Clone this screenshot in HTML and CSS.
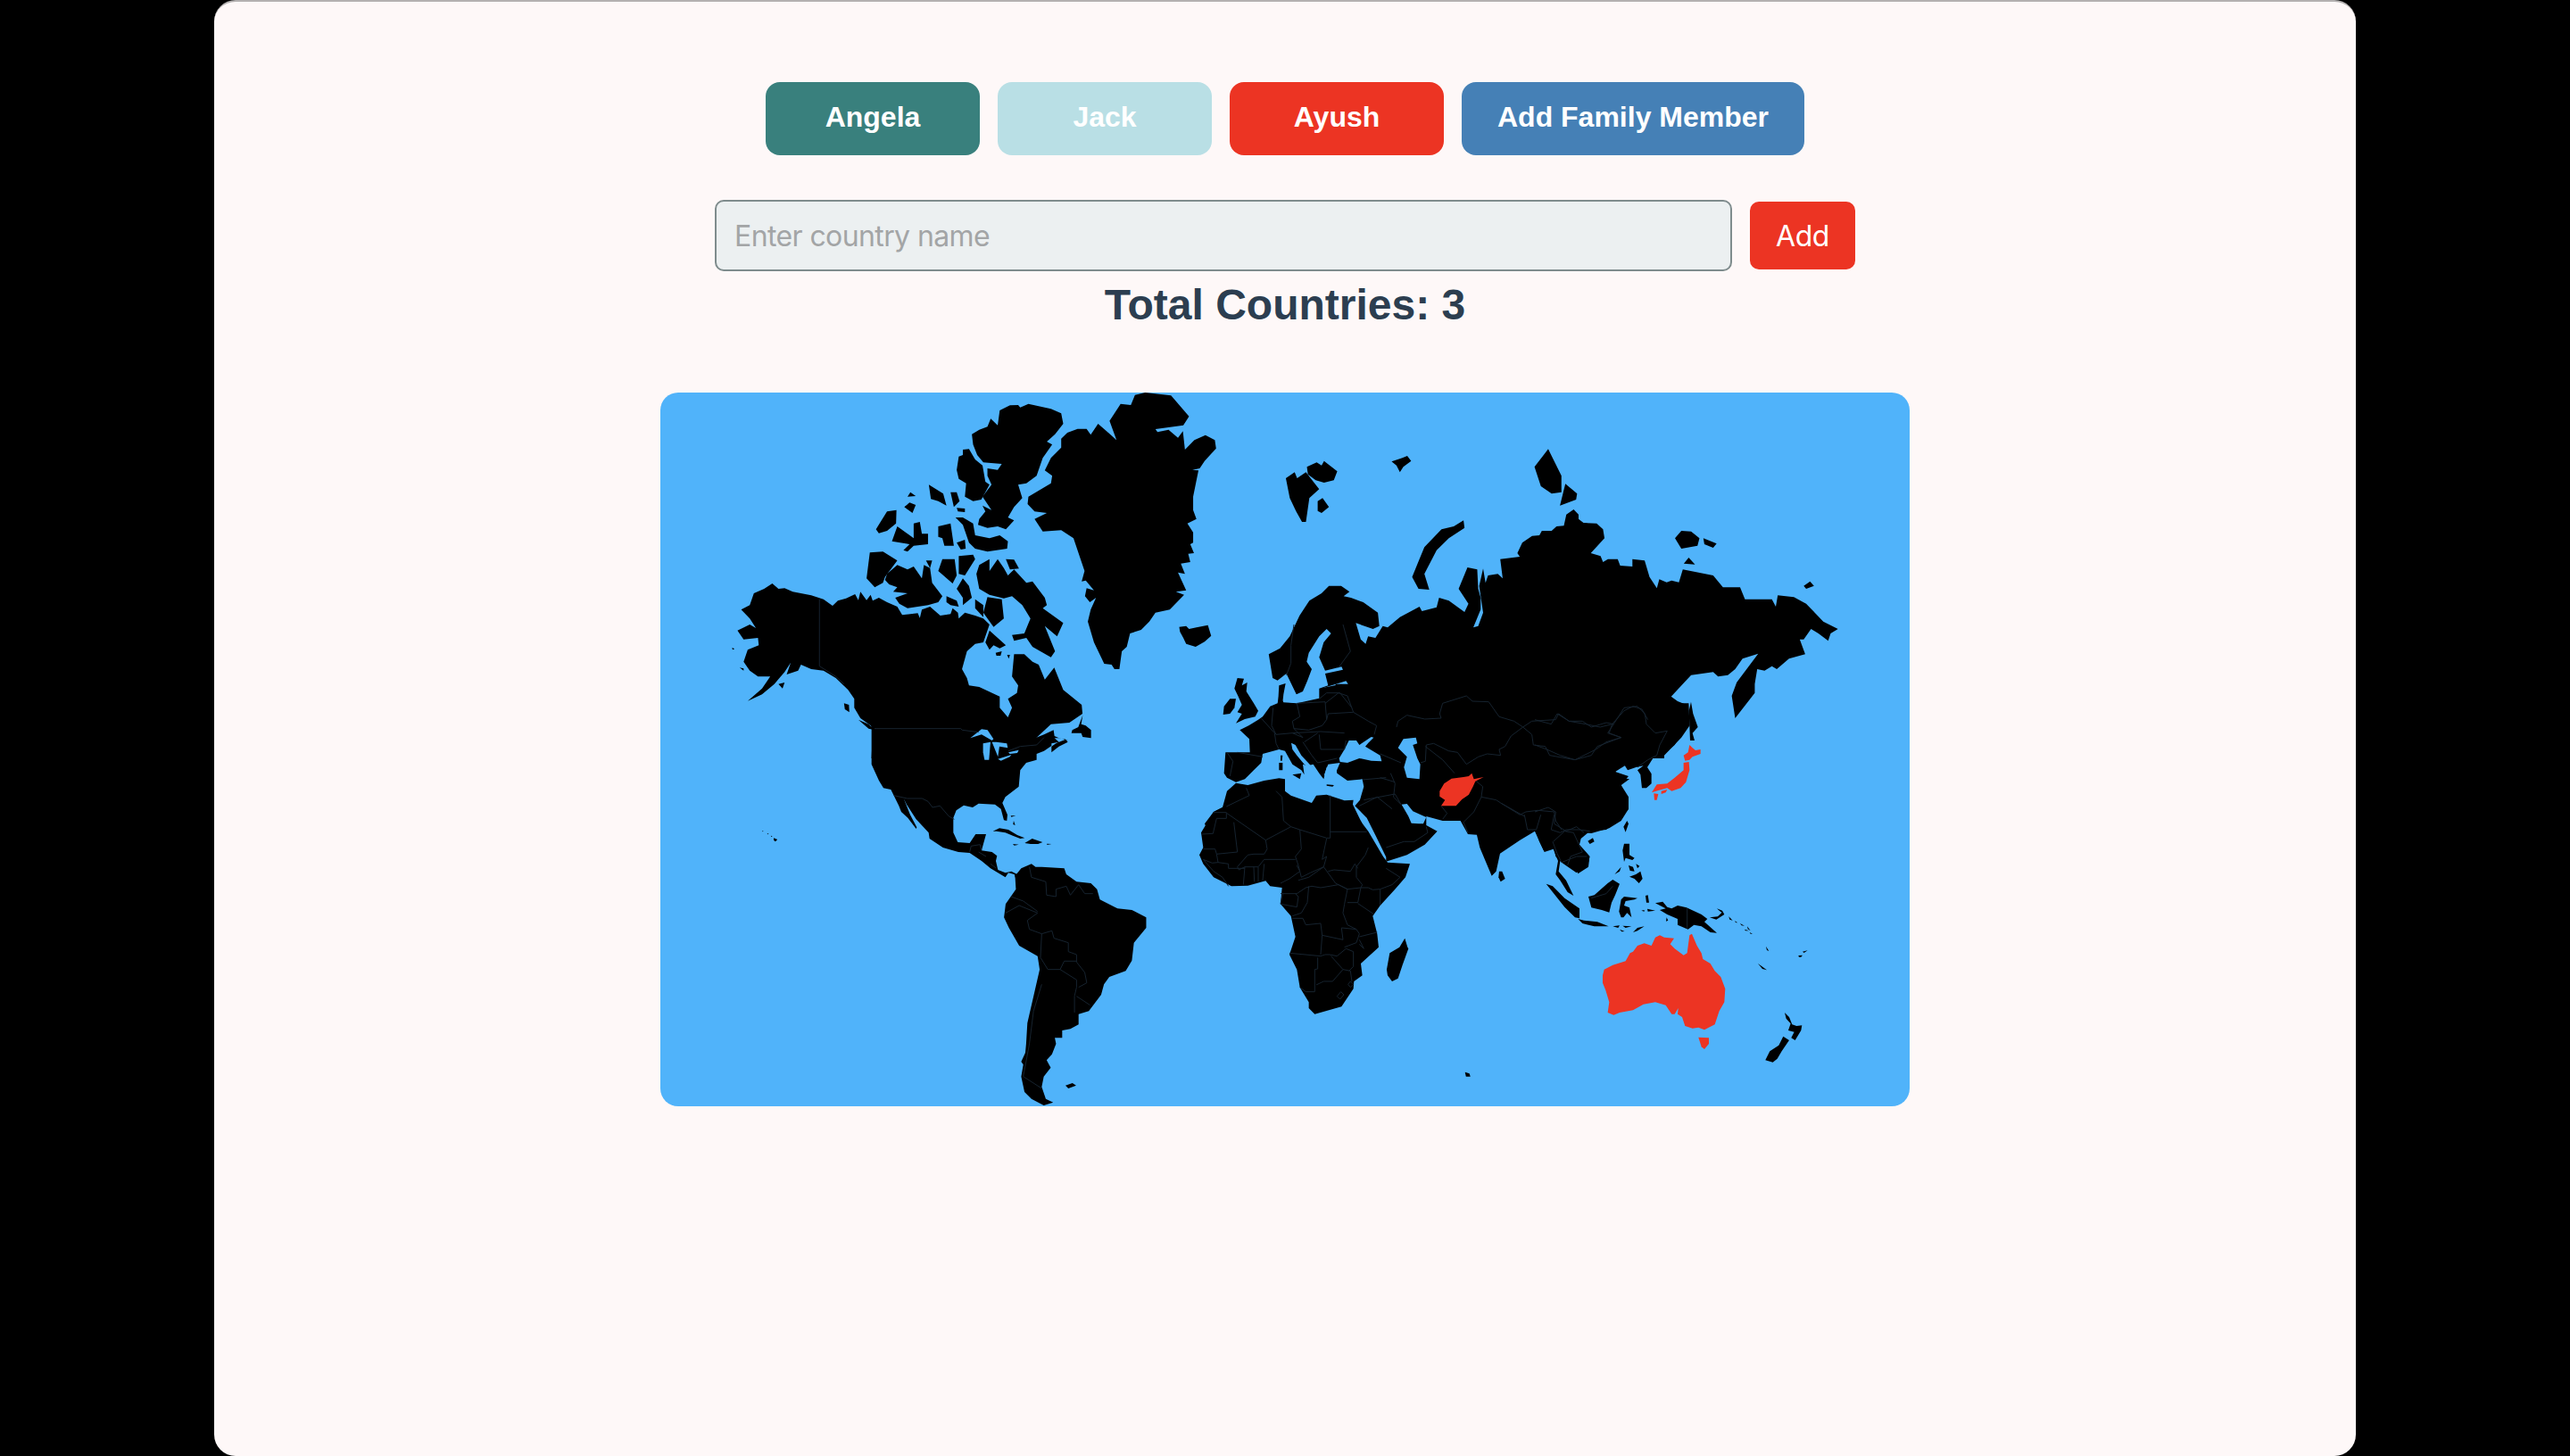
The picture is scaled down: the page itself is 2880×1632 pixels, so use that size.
FILE: index.html
```html
<!DOCTYPE html>
<html lang="en">
<head>
<meta charset="utf-8">
<title>Family Travel Tracker</title>
<link rel="stylesheet" href="styles.css">
</head>
<body>
<main class="card">
  <nav class="tabs">
    <button class="tab tab-teal">Angela</button>
    <button class="tab tab-pale">Jack</button>
    <button class="tab tab-red">Ayush</button>
    <button class="tab tab-blue">Add Family Member</button>
  </nav>
  <form class="entry">
    <input class="entry-input" type="text" placeholder="Enter country name">
    <button class="entry-add" type="button">Add</button>
  </form>
  <h2 class="total">Total Countries: 3</h2>
  <div class="map">
    <svg class="map-svg" viewBox="740 440 1400 800" aria-label="World map">
      <!-- North America, Arctic, Greenland, Iceland -->
      <g class="land" transform="translate(730 430) scale(.4592 .3333)">
        <path d="M219 760L240 745L250 705L275 690L295 672L310 690L325 688L345 700L390 712L420 725L442 747L455 730L475 722L497 708L505 728L510 700L525 728L535 710L540 730L555 720L575 735L600 750L612 778L650 772L655 788L660 760L680 750L705 780L730 775L735 755L748 770L750 790L765 770L790 780L810 790L825 810L810 870L790 875L770 900L758 960L770 990L775 1015L800 1020L850 1052L850 1090L870 1122L880 1090L870 1060L892 1040L895 1015L880 985L885 910L910 910L930 935L945 945L960 995L983 955L1005 1030L1050 1080L1052 1110L1020 1140L975 1145L940 1190L915 1260L537 1260L540 1170L550 1185L535 1150L510 1125L495 1090L495 1060L480 1030L450 990L420 965L390 960L365 945L358 965L330 978L340 938L325 970L300 1010L270 1045L235 1067L270 1025L290 985L260 985L240 965L225 935L235 895L262 880L260 855L225 860L210 830L240 810L255 822L240 790Z"/>
        <path d="M800 610L825 590L825 630L845 590L860 620L870 645L885 625L915 670L930 665L960 720L965 745L955 755L1005 805L990 850L960 815L985 900L975 920L930 885L915 855L885 865L880 845L910 840L925 790L905 745L880 715L860 722L825 710L800 690L793 640Z"/>
        <path d="M865 590L885 592L897 622L875 625Z"/>
        <path d="M825 830L865 880L850 890L835 880L825 895L815 870Z"/>
        <path d="M840 905L855 900L852 915L842 915ZM868 912L875 912L872 925Z"/>
        <path d="M575 640L600 610L625 625L640 615L660 655L665 610L680 620L685 670L710 715L700 735L675 745L625 755L605 740L595 720L625 705L590 700L600 685L580 675L570 660Z"/>
        <path d="M533 568L565 565L600 595L570 650L565 670L545 685L525 655Z"/>
        <path d="M710 590L740 590L745 645L735 672L700 630ZM750 580L785 575L790 590L765 645L750 640ZM760 655L775 680L782 720L760 745L760 720L745 690ZM820 718L855 725L860 790L835 818L820 790L810 770ZM790 725L810 745L810 785L790 755ZM720 715L745 730L750 750L730 745L720 735ZM670 595L685 595L680 620Z"/>
        <path d="M575 430L598 425L597 470L575 495L555 503L548 490ZM600 480L640 520L640 470L655 465L660 505L675 505L675 540L640 545L625 565L615 560L630 540L587 530ZM700 480L730 470L738 545L715 545L710 520L700 515ZM745 535L765 525L767 555L755 558ZM742 450L760 450L785 470L790 510L825 520L850 510L870 530L868 555L820 565L790 555L775 535L760 475ZM677 340L712 370L720 410L700 395L682 388ZM730 365L745 365L752 395L738 415ZM745 418L765 420L765 432L748 430ZM625 380L632 365L645 378ZM617 415L630 400L645 408L637 435Z"/>
        <path d="M782 170L800 155L820 145L828 118L845 140L850 90L875 73L895 72L900 80L920 68L975 85L1000 100L1005 135L985 170L965 195L978 205L955 250L940 310L915 335L895 340L905 385L885 415L870 450L885 460L865 490L845 480L820 485L797 475L800 455L815 430L808 410L830 425L808 380L830 340L820 310L820 285L845 290L855 270L810 265L795 240L785 205Z"/>
        <path d="M760 222L775 220L790 255L808 275L815 330L825 340L805 390L785 395L765 380L768 335L750 320L745 290L750 245L760 240Z"/>
        <path d="M1000 185L1015 165L1040 152L1062 152L1072 172L1090 135L1115 165L1135 190L1118 125L1145 68L1170 72L1180 38L1205 30L1268 40L1312 110L1298 140L1230 153L1235 163L1262 155L1285 182L1297 160L1302 222L1325 190L1352 173L1375 190L1378 218L1350 260L1338 285L1320 290L1335 292L1322 380L1322 425L1330 455L1308 470L1322 500L1322 535L1315 540L1324 570L1310 572L1315 600L1292 605L1302 640L1285 635L1305 695L1280 700L1300 710L1265 760L1230 770L1215 800L1195 828L1168 840L1160 885L1148 900L1142 960L1130 960L1123 945L1105 942L1080 870L1065 800L1072 760L1085 720L1070 735L1058 715L1062 688L1080 695L1060 662L1050 665L1057 630L1030 520L1000 493L955 497L935 455L965 435L935 430L918 405L920 380L975 335L978 310L960 292L975 250L1000 215Z"/>
        <path d="M1288 818L1305 815L1312 825L1330 820L1358 812L1366 848L1350 868L1328 885L1305 875L1298 855L1290 835Z"/>
        <path d="M470 1075L482 1080L483 1105L472 1095ZM505 1130L530 1145L545 1165L530 1160ZM215 955L225 958L225 965ZM310 1010L325 1005L320 1025ZM197 888L203 892L198 895Z"/>
      </g>
      <!-- USA, Mexico, Central America, Caribbean -->
      <g class="land" transform="translate(930 720) scale(.3333)">
        <path d="M140 260L140 410L165 465L180 490L205 495L215 515L232 550L240 570L262 590L290 627L292 622L270 580L248 525L258 545L290 595L332 640L335 660L380 690L432 705L470 708L510 735L540 760L565 775L590 790L600 775L620 780L625 795L630 780L610 770L590 775L565 765L558 735L562 718L545 705L510 700L525 645L490 645L470 675L430 672L415 640L415 590L425 565L450 548L480 555L500 542L555 545L575 560L585 598L595 600L597 580L580 540L590 520L635 485L640 430L660 405L695 395L695 375L720 365L745 348L745 340L800 330L770 322L755 315L752 295L720 310L690 322L640 260Z"/>
        <path d="M745 370L770 350L800 335L790 325L760 340L745 350Z"/>
        <path d="M850 245L835 285L815 295L812 305L845 305L850 318L878 322L878 295L860 280L845 275Z"/>
        <path d="M548 635L570 625L600 630L630 648L655 658L640 660L615 650L590 640L560 635ZM655 675L680 660L715 672L700 678L675 678ZM615 678L635 680L620 683ZM730 677L745 678L730 681ZM608 583L625 583L610 587ZM618 600L623 615L616 612Z"/>
      </g>
      <!-- South America and mid-ocean islands -->
      <g class="land" transform="translate(800 840) scale(.4592 .3333)">
        <path d="M735 425L750 400L775 385L785 395L800 395L855 400L860 420L885 445L920 450L935 470L942 505L985 535L1020 540L1055 565L1055 600L1025 650L1020 710L1005 745L965 765L952 790L945 825L915 880L890 890L890 925L870 940L850 945L850 970L832 970L835 990L825 1025L812 1045L822 1070L805 1100L800 1135L810 1175L828 1187L805 1197L775 1175L758 1152L750 1100L755 1060L750 1050L760 1020L762 990L765 920L780 830L795 740L790 695L745 660L720 600L708 565L712 520L737 470Z"/>
        <path d="M858 1130L875 1122L884 1130L865 1140ZM146 298L155 303L150 310L146 305ZM118 273L121 275L119 277ZM130 282L134 284L131 286ZM139 290L143 292L140 294Z"/>
      </g>
      <!-- Northern Eurasia and Arctic islands -->
      <g class="land" transform="translate(1300 430) scale(.5485 .3333)">
        <path d="M222 910L245 890L265 850L285 780L305 730L330 705L345 680L370 680L387 700L375 715L390 720L415 735L445 770L448 815L435 825L400 805L410 860L420 875L425 850L440 855L455 815L465 820L490 785L530 750L535 765L565 752L570 720L590 730L622 768L630 740L610 690L628 618L648 625L650 690L655 720L655 760L640 820L650 815L660 770L652 680L660 622L665 670L670 645L690 640L700 655L695 590L735 582L730 570L740 535L760 512L775 510L780 495L800 495L810 480L825 478L830 440L845 423L855 440L855 455L865 468L892 470L905 490L908 520L880 570L900 580L905 600L915 590L935 590L940 612L965 615L965 590L990 595L1000 650L1015 688L1020 658L1035 668L1045 662L1060 668L1068 625L1130 645L1150 685L1185 685L1195 725L1250 725L1258 750L1262 712L1295 718L1320 740L1355 800L1385 825L1370 840L1365 865L1345 840L1330 825L1315 860L1307 860L1318 910L1285 925L1260 960L1250 950L1235 965L1220 960L1215 1010L1215 1040L1175 1125L1168 1050L1178 1005L1222 908L1190 925L1175 960L1160 980L1140 985L1130 970L1085 980L1040 1060L1060 1075L1080 1075L1082 1150L1065 1190L1030 1250L1030 1260L480 1260L380 1000L280 1050L258 975L240 998L230 990Z"/>
        <path d="M515 650L525 610L540 550L575 490L600 480L620 460L622 485L590 520L565 560L540 640L550 693L528 690Z"/>
        <path d="M257 318L275 298L280 318L298 298L325 355L305 385L298 465L290 465L278 430L265 385ZM300 280L320 265L330 275L335 260L362 295L355 325L335 333L318 325L302 305ZM322 395L332 385L345 415L330 435L322 428ZM473 262L495 250L505 243L513 260L497 280L490 298L483 275Z"/>
        <path d="M765 280L793 220L820 310L820 365L800 370L778 345ZM828 337L852 370L850 390L817 410Z"/>
        <path d="M1052 520L1065 495L1085 497L1102 520L1098 545L1065 555ZM1110 520L1137 538L1130 552L1112 540ZM1070 605L1080 585L1093 608ZM1315 680L1328 665L1336 680L1320 690Z"/>
      </g>
      <!-- Africa -->
      <g class="land" transform="translate(1320 880) scale(.3333)">
        <path d="M78 160L120 90L160 70L180 90L590 90L640 155L690 240L705 260L780 265L765 310L730 350L680 405L655 440L670 500L675 545L615 600L620 640L592 660L590 685L550 745L460 770L440 750L440 730L410 680L400 620L375 570L395 510L380 440L345 400L350 345L310 340L295 322L235 338L180 340L120 310L85 265L72 235L85 210Z"/>
        <path d="M763 515L772 545L775 550L755 605L740 650L720 660L705 640L702 620L712 565L745 545Z"/>
        <path d="M1080 290L1090 290L1100 315L1085 325L1078 310Z"/>
      </g>
      <!-- Europe, North Africa, South Asia -->
      <g class="land" transform="translate(1350 700) scale(.3333)">
        <path d="M265 262L250 235L245 265L220 275L195 310L180 320L148 340L118 355L150 385L152 430L110 430L70 430L65 500L75 515L105 530L135 520L165 490L190 465L195 435L250 420L270 425L295 470L325 490L335 505L330 470L345 475L365 470L385 500L400 520L410 480L440 470L460 462L460 200L385 215L310 265Z"/>
        <path d="M440 470L445 500L480 525L530 520L535 545L522 590L505 610L520 625L545 650L575 710L610 782L610 797L680 775L740 740L782 695L745 675L745 645L800 660L860 660L885 705L915 707L925 750L965 845L980 830L993 770L1060 725L1110 695L1140 760L1170 730L1180 780L1200 800L1250 835L1290 800L1295 780L1260 740L1265 720L1295 695L1350 690L1395 655L1425 620L1400 540L1425 510L1380 495L1420 470L1450 480L1480 440L1500 200L440 200Z"/>
        <path d="M0 670L30 630L60 615L75 560L105 533L145 540L200 525L250 517L270 520L270 560L290 575L360 600L375 575L410 572L470 592L500 590L498 605L520 650L545 700L585 770L612 810L560 860L300 800L20 720Z"/>
      </g>
      <!-- East and South-East Asia, Oceania -->
      <g class="land" transform="translate(1720 780) scale(.3333)">
        <path d="M0 0L455 0L480 18L510 30L515 60L505 110L470 165L430 200L405 197L378 240L392 262L392 295L375 310L360 310L355 265L345 250L365 235L340 240L312 250L300 230L270 255L290 275L318 280L290 300L315 340L315 380L290 420L250 445L190 462L165 460L140 455L125 480L160 525L183 550L180 575L145 598L135 575L112 570L85 555L80 590L105 620L130 672L110 660L85 620L70 600L78 555L62 515L32 525L15 490L0 450Z"/>
      </g>
      <!-- Inland and enclosed seas cut out of the land -->
      <g class="sea" transform="translate(1350 700) scale(.3333)">
        <path d="M452 450L470 420L485 390L510 390L520 405L560 378L568 380L550 398L540 410L590 440L595 460L560 458L520 450L480 465L455 462Z"/>
        <path d="M650 415L668 385L710 380L715 400L700 405L715 450L725 470L722 520L680 515L670 480L680 445Z"/>
        <path d="M425 30L410 15L385 40L350 95L343 125L360 150L345 190L330 225L297 240L285 232L270 235L278 260L310 265L385 248L385 215L415 205L405 165L465 152L460 142L405 155L385 110L400 60Z"/>
        <path d="M662 605L680 603L700 628L745 648L735 670L720 670L695 668L685 645Z"/>
        <path d="M291 398L305 405L325 440L360 478L345 478L335 470L310 440L295 420Z"/>
        <path d="M415 470L455 465L440 500L425 500L408 522L402 505Z"/>
      </g>
      <g class="sea" transform="translate(930 720) scale(.3333)">
        <path d="M472 322L510 292L530 295L550 325L545 330L510 310Z"/>
        <path d="M515 340L540 335L535 395L520 395L515 370Z"/>
        <path d="M545 335L560 335L595 340L598 355L570 350L565 385L555 360Z"/>
        <path d="M565 392L610 378L605 385L575 398Z"/>
        <path d="M600 370L635 362L630 372L605 375Z"/>
        <path d="M755 322L775 322L790 328L770 335Z"/>
      </g>
      <g class="land" transform="translate(1350 700) scale(.3333)">
        <path d="M248 240L250 205L272 198L265 235L262 262L248 265Z"/>
        <path d="M110 180L132 182L125 205L143 195L140 225L165 265L180 290L170 310L135 318L105 332L125 300L110 295L125 270L112 240L100 215Z"/>
        <path d="M65 275L85 250L105 250L100 280L85 300L62 303Z"/>
        <path d="M295 505L325 500L320 520ZM250 465L262 465L262 490L250 490ZM255 440L262 440L260 458L255 458ZM410 538L435 540L430 545L410 542Z"/>
      </g>
      <g class="land" transform="translate(1720 780) scale(.3333)">
        <path d="M525 20L532 60L548 105L530 125L537 150L522 150L520 100L518 50Z"/>
        <path d="M178 488L195 478L200 490L185 498ZM298 440L310 420L315 430L305 458Z"/>
        <path d="M295 520L300 497L318 497L318 535L335 545L328 552L305 545L300 558ZM318 608L340 600L355 590L362 615L350 630L335 615ZM315 570L330 575L335 590L320 588ZM340 565L352 572L345 580ZM268 600L290 575L285 590Z"/>
        <path d="M180 675L200 670L245 630L262 618L285 632L270 670L258 695L250 728L225 720L190 712Z"/>
        <path d="M283 725L290 685L300 675L345 680L335 685L305 690L300 705L318 712L325 745L310 730L298 745L290 745Z"/>
        <path d="M38 632L60 640L100 680L150 715L150 748L135 745L100 710Z"/>
        <path d="M145 750L165 755L210 760L248 775L200 775L160 765Z"/>
        <path d="M262 775L285 772L280 780ZM295 773L325 775L305 780ZM285 785L302 792L292 793ZM330 795L345 780L368 775L345 790Z"/>
        <path d="M405 697L430 692L445 710L460 715L480 705L510 712L560 735L580 750L570 760L612 797L590 795L560 775L535 770L515 785L480 770L480 750L445 735L420 720L440 715Z"/>
        <path d="M372 672L380 670L384 695L375 695ZM358 722L368 720L368 725ZM378 716L405 722L380 725ZM443 745L448 755L441 758Z"/>
        <path d="M588 745L615 742L632 725L637 735L610 752ZM612 715L630 722L637 735L620 722ZM652 742L665 755L655 752ZM672 757L682 763L675 762ZM690 765L705 773L695 772ZM714 775L725 790L716 784ZM705 785L720 790L708 790ZM722 795L732 800L725 800Z"/>
      </g>
      <g class="land" transform="translate(1720 960) scale(.3333)">
        <path d="M777 302L787 318L780 315ZM886 333L900 332L895 338L888 338ZM900 320L917 316L905 324ZM750 360L780 382L765 378Z"/>
        <path d="M840 525L855 540L865 565L880 570L898 568L895 585L875 618L862 610L872 590L852 585L860 562L845 545Z"/>
        <path d="M835 605L855 618L830 655L815 680L800 692L775 685L790 655L820 635Z"/>
      </g>
      <g class="land" transform="translate(1300 800) scale(.5485 .3333)">
        <path d="M623 1205L632 1210L634 1220L625 1220Z"/>
      </g>
      <!-- Country borders -->
      <g transform="translate(1320 880) scale(.3333)">
        <path class="border" d="M165 95L295 185L380 140L410 150L500 178L512 178L512 35M512 157L635 157M410 150L415 215L395 240L405 270L415 310L445 295L490 275L500 240L485 250L500 180M188 125L200 225L130 232L125 215L85 215M80 165L118 163L130 112L163 112L163 92L120 92M330 20L350 40L355 120L380 140M163 72L240 35L230 10M295 185L300 215L290 232L255 232L235 235L200 275L205 285L225 275L270 275L290 250L395 250M290 265L285 320M345 330L375 315L410 290L400 270M225 275L220 335M255 275L257 325M270 275L270 325M405 320L440 310L490 275L530 330L570 350L615 345L640 345L655 352L680 350L720 335L747 310L700 280M640 210L630 235L600 275L600 310L620 335L615 345M505 290L525 285L580 290L595 265L605 280M345 365L400 365L430 345L450 340L480 345L540 335L570 350L560 400L555 430L570 470L600 485L610 500L600 530L560 545M615 345L605 395L570 395M605 398L660 435M680 350L680 405M610 510L670 495M440 340L435 395L415 430L385 440M352 365L345 400L400 410L405 375L395 365M385 448L420 448L430 470L480 465L485 505L555 520L550 480L600 485M375 565L480 575L495 570L510 570L535 575L565 550L590 560L590 610L575 625M485 505L480 570M470 580L470 618L460 620L460 695L430 695L410 680M465 672L490 660L520 660L555 620L580 625L585 660M515 575L555 620M610 520L625 550L610 535M535 710L548 695L558 705L545 720ZM572 670L580 660L590 670L580 680ZM130 232L135 260L115 262L85 250L120 290L150 310L170 340M135 260L170 265L170 280L225 280"/>
      </g>
      <g transform="translate(1350 700) scale(.3333)">
        <path class="border" d="M645 345L650 325L680 305L740 318L795 315L790 300L800 265L880 240L900 258L955 260L990 310L1040 325L1070 345L1100 325L1180 320L1190 300L1225 325L1280 335L1330 345L1370 335L1410 290L1440 275L1470 285L1490 320M1070 345L1100 370L1105 405L1145 410L1160 440L1245 455L1300 440L1320 410L1400 380L1360 365L1370 335M1070 345L1030 375L1010 410L990 420L995 440L950 435L920 445L880 470L850 430L820 425L770 400L745 405L742 460L725 465M742 410L800 455L840 500M625 500L640 535L635 580L660 605M795 610L815 635L800 655M905 520L935 545L930 580L980 590L995 600L1060 640L1080 630L1120 625L1175 630L1180 660L1200 690M930 580L905 630L870 665L885 700M995 600L1075 645M1075 640L1085 690L1115 690L1130 640M1175 640L1165 690L1195 700L1215 690L1260 690L1295 695M1170 730L1185 770L1200 800L1250 780L1285 780M535 590L640 570L660 605M520 610L580 580L630 620M610 750L670 730L705 730L750 700L745 680M590 515L640 530M530 522L610 515M590 435L660 465M310 265L320 310L295 325L300 350L350 355L395 340L410 320L415 300L500 295L550 325L578 340L570 370M310 265L405 260L410 320M385 250L410 230L455 230L495 280M405 265L450 230L480 240L500 295M190 315L235 365L240 400L250 420M75 430L95 460L85 510M110 430L195 445M230 280L225 340L240 370L295 365L330 380L300 350M295 365L390 360L470 365M385 370L390 420L470 420L475 390M335 395L380 365M330 395L360 440L380 465L445 450M300 0L290 70L290 130L275 170M465 0L490 90L450 145"/>
      </g>
      <g transform="translate(930 720) scale(.3333)">
        <path class="border" d="M150 290L440 290L445 295L500 302M600 365L640 350L695 345L720 320M215 515L260 525L310 525L330 535L345 555L370 550L400 585L418 595M470 705L475 685L505 680L510 700M500 705L525 720M540 745L560 760"/>
      </g>
      <g transform="translate(730 430) scale(.4592 .3333)">
        <path class="border" d="M410 725L410 950L450 985L470 1010"/>
      </g>
      <g transform="translate(800 840) scale(.4592 .3333)">
        <path class="border" d="M770 395L775 430L810 445L812 490L835 495L835 470L860 460L870 490L890 455L905 485L925 485M725 495L755 510L790 545M712 550L745 525L790 550L765 575L770 605L800 620L825 610L830 635L865 650L865 680L885 690L885 715L905 750L910 785L890 800M800 620L797 700L815 740L845 740L885 775L885 800L880 830L880 885M845 740L855 712L885 712M885 830L918 860M800 790L780 880L770 990L755 1100L800 1140"/>
      </g>
      <g transform="translate(1720 780) scale(.3333)">
        <path class="border" d="M0 80L55 95L75 60L115 85L160 85L190 105L240 90L265 95L300 40L345 35L370 60L375 95L405 125L445 118L420 165L410 200L380 215L345 240M265 95L245 125L290 140L240 155L205 180L135 215L85 200L40 180L0 165M0 390L45 375L70 390L65 430L105 455L140 440L165 460M62 490L100 455L130 460L160 525L120 540L110 570M512 714L512 782M190 680L240 665L262 640"/>
      </g>
      <!-- Visited countries -->
      <g class="visited" transform="translate(1350 700) scale(.3333)">
        <path d="M790 560L805 535L830 518L870 513L888 510L898 500L905 520L938 513L910 527L902 545L888 572L865 588L845 610L795 610L808 590L790 578Z"/>
      </g>
      <g class="visited" transform="translate(1720 780) scale(.3333)">
        <path d="M520 165L530 175L540 183L557 180L557 195L530 205L520 215L505 218L500 200L515 190Z"/>
        <path d="M500 225L518 222L520 250L508 290L490 310L460 320L445 310L415 318L393 325L410 298L445 295L470 275L500 250Z"/>
        <path d="M400 328L415 330L410 350L402 350ZM425 320L445 315L440 325L425 330Z"/>
      </g>
      <g class="visited" transform="translate(1720 960) scale(.3333)">
        <path d="M228 400L233 380L262 365L305 352L320 325L330 320L345 300L368 292L392 300L405 272L420 265L435 272L468 275L455 295L470 310L500 332L512 325L520 265L528 260L545 300L560 325L565 345L590 360L605 385L625 405L640 445L637 490L620 520L605 565L570 583L550 575L530 578L505 570L495 540L480 530L482 510L470 530L460 530L440 500L405 490L365 497L330 517L285 525L265 533L245 525L250 490L238 450L228 425Z"/>
        <path d="M550 608L585 610L585 630L570 648L560 640Z"/>
      </g>
    </svg>
  </div>
</main>
</body>
</html>
```
FILE: styles.css
```css
* { box-sizing: border-box; }

html, body { margin: 0; height: 100%; }

body {
  background: #000;
  font-family: "Liberation Sans", Arial, sans-serif;
}

.card {
  width: 2400px;
  height: 1632px;
  margin: 0 auto;
  padding-top: 90px;
  background: #fef8f8;
  border-top: 2px solid #b4b1b1;
  border-radius: 24px;
  overflow: hidden;
}

.tabs {
  display: flex;
  justify-content: center;
  gap: 20px;
}

.tab {
  min-width: 240px;
  height: 82px;
  padding: 0 40px 3px;
  border: 0;
  border-radius: 16px;
  color: #fff;
  font: bold 32px "Liberation Sans", Arial, sans-serif;
}

.tab-teal { background: #39807d; }
.tab-pale { background: #b9dfe5; }
.tab-red { background: #ec3423; }
.tab-blue { background: #4580b6; }

.entry {
  display: flex;
  justify-content: center;
  align-items: center;
  gap: 20px;
  margin-top: 50px;
}

.entry-input {
  width: 1140px;
  height: 80px;
  padding: 0 20px;
  border: 2px solid #7f8c8d;
  border-radius: 10px;
  background: #ecf0f1;
  font: 32px Inter, sans-serif;
  letter-spacing: -0.6px;
  outline: none;
}

.entry-input::placeholder { color: #a3a5a6; opacity: 1; }

.entry-add {
  width: 118px;
  height: 76px;
  border: 0;
  border-radius: 10px;
  background: #ec3423;
  color: #fff;
  font: 32px Inter, sans-serif;
  letter-spacing: -0.4px;
}

.total {
  margin: 10px 0 0;
  height: 56px;
  color: #2c3e50;
  font: bold 48px/56px "Liberation Sans", Arial, sans-serif;
  text-align: center;
}

.map {
  width: 1400px;
  height: 800px;
  margin: 70px auto 0;
  background: #50b3fa;
  border-radius: 20px;
  overflow: hidden;
}

.map-svg { display: block; width: 100%; height: 100%; }

.land { fill: #000; }
.sea { fill: #50b3fa; }
.visited { fill: #ec3423; }

.border {
  fill: none;
  stroke: #16232f;
  stroke-width: 1;
  vector-effect: non-scaling-stroke;
}
```
